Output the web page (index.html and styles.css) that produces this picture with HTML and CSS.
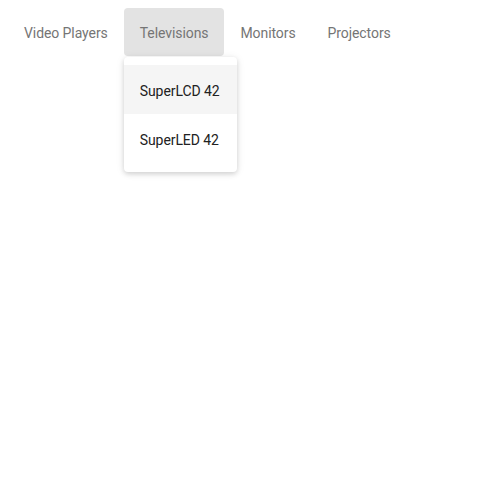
FILE: index.html
```html
<!DOCTYPE html>
<html>
<head>
<meta charset="utf-8">
<link rel="stylesheet" href="styles.css">
</head>
<body>
<div class="tabs">
  <div class="tab">Video Players</div>
  <div class="tab-wrap">
    <div class="tab active">Televisions</div>
    <div class="menu">
      <div class="item selected">SuperLCD 42</div>
      <div class="item">SuperLED 42</div>
    </div>
  </div>
  <div class="tab">Monitors</div>
  <div class="tab">Projectors</div>
</div>
</body>
</html>
```
FILE: styles.css
```css
html, body {
  margin: 0;
  background: #fff;
}
html {
  height: 100%;
}
body {
  min-height: 100%;
  box-sizing: border-box;
  padding: 8px;
  font-family: Roboto, "Liberation Sans", sans-serif;
  font-size: 14px;
}
.tabs {
  display: flex;
  align-items: flex-start;
}
.tab-wrap {
  position: relative;
}
.tab {
  height: 48px;
  padding: 1px 16px 0;
  display: flex;
  align-items: center;
  color: #757575;
  border-radius: 4px;
  box-sizing: border-box;
  letter-spacing: -0.08px;
}
.tab.active {
  background: #e3e3e3;
}
.menu {
  position: absolute;
  z-index: 5;
  top: 49px;
  left: 0;
  width: 113px;
  padding: 8px 0 9px;
  background: #fff;
  border-radius: 4px;
  box-shadow: 0 2px 5px rgba(0,0,0,0.14), 0 1px 10px rgba(0,0,0,0.08);
  white-space: nowrap;
}
.item {
  box-sizing: border-box;
  height: 49px;
  padding: 3px 16px 0;
  line-height: 46px;
  color: #212121;
  letter-spacing: -0.08px;
}
.item.selected {
  background: #f5f5f5;
}
```
